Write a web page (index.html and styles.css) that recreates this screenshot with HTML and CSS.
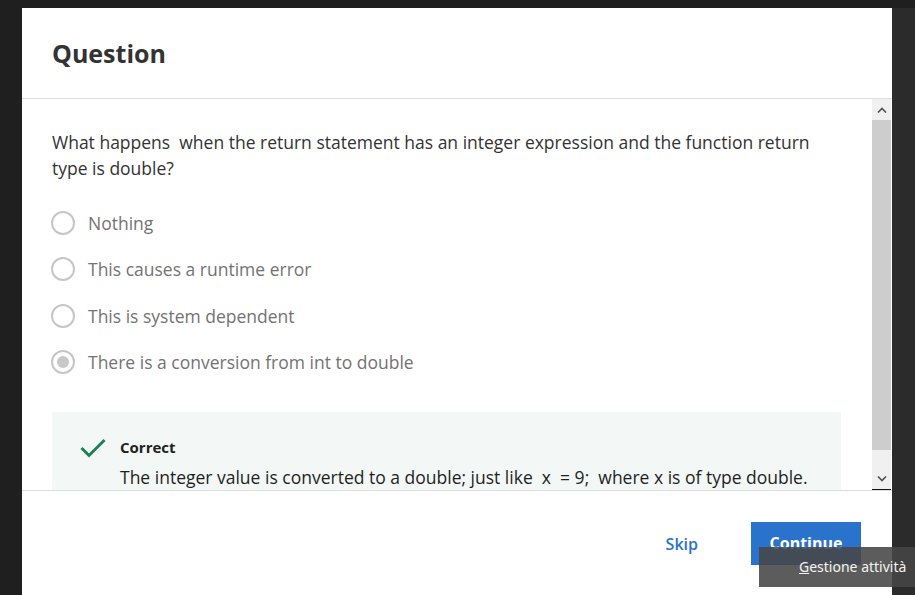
FILE: index.html
```html
<!DOCTYPE html>
<html lang="en">
<head>
<meta charset="utf-8">
<title>Question</title>
<link rel="stylesheet" href="styles.css">
</head>
<body>
<div class="screen">
  <div class="modal">
    <header class="modal-header"><h2 class="title">Question</h2></header>
    <div class="modal-body">
      <div class="scroll-content">
        <p class="question">What happens&nbsp; when the return statement has an integer expression and the function return type is double?</p>
        <ul class="options">
          <li class="option"><span class="radio"></span><span class="label">Nothing</span></li>
          <li class="option"><span class="radio"></span><span class="label">This causes a runtime error</span></li>
          <li class="option"><span class="radio"></span><span class="label">This is system dependent</span></li>
          <li class="option"><span class="radio checked"></span><span class="label">There is a conversion from int to double</span></li>
        </ul>
        <div class="feedback">
          <svg class="check" width="26" height="20" viewBox="0 0 26 20"><polyline points="1.5,10 9,17.5 24.5,2" fill="none" stroke="#1e8155" stroke-width="3"/></svg>
          <div class="fb-body">
            <div class="fb-title">Correct</div>
            <p class="fb-text">The integer value is converted to a double; just like&nbsp; x&nbsp; = 9;&nbsp; where x is of type double.</p>
          </div>
        </div>
      </div>
      <div class="scrollbar">
        <div class="sb-btn"><svg width="10" height="6" viewBox="0 0 10 6"><polyline points="1,5.5 5,1.5 9,5.5" fill="none" stroke="#505050" stroke-width="1.6"/></svg></div>
        <div class="sb-thumb"></div>
        <div class="sb-track"></div>
        <div class="sb-btn sb-down"><svg width="10" height="6" viewBox="0 0 10 6"><polyline points="1,0.5 5,4.5 9,0.5" fill="none" stroke="#505050" stroke-width="1.6"/></svg></div>
      </div>
    </div>
    <footer class="modal-footer">
      <button class="btn-skip">Skip</button>
      <button class="btn-continue">Continue</button>
    </footer>
  </div>
  <div class="side"></div>
  <div class="tooltip"><span class="ul">G</span>estione attività</div>
</div>
</body>
</html>
```

FILE: styles.css
```css
* { box-sizing: border-box; }
html, body { margin: 0; padding: 0; }
body {
  background: #1f1f1f;
  font-family: "Open Sans", "Noto Sans", sans-serif;
  overflow: hidden;
}
.screen {
  position: relative;
  width: 915px;
  height: 595px;
  display: flex;
  padding: 8px 0 0 22px;
}
.modal {
  width: 870px;
  height: 587px;
  background: #fff;
  display: flex;
  flex-direction: column;
}
.side {
  flex: 1;
  background: #2b2b2b;
}
.modal-header {
  height: 91px;
  padding: 29px 30px 0;
  border-bottom: 1px solid #dedede;
}
.title {
  margin: 0;
  font-size: 25px;
  line-height: 32px;
  font-weight: 700;
  color: #333;
}
.modal-body {
  height: 391px;
  display: flex;
  overflow: hidden;
}
.scroll-content {
  flex: 1;
  padding: 30px 31px 0 30px;
  overflow: hidden;
}
.question {
  margin: 0;
  font-size: 17.5px;
  line-height: 26px;
  color: #333;
}
.options {
  list-style: none;
  margin: 19px 0 0;
  padding: 0;
}
.option {
  display: flex;
  align-items: center;
  height: 46.33px;
  gap: 13px;
}
.radio {
  width: 24px;
  height: 24px;
  margin-left: -1px;
  border: 2px solid #c6c6c6;
  border-radius: 50%;
  display: flex;
  align-items: center;
  justify-content: center;
  flex: none;
}
.radio.checked::after {
  content: "";
  width: 12px;
  height: 12px;
  border-radius: 50%;
  background: #c8c8c8;
}
.label {
  font-size: 17.5px;
  line-height: 26px;
  color: #737373;
}
.feedback {
  margin-top: 27px;
  background: #f3f8f6;
  display: flex;
  gap: 14px;
  padding: 25px 28px 30px;
  align-items: flex-start;
}
.check { flex: none; margin-top: 1px; }
.fb-title {
  font-size: 15px;
  line-height: 20px;
  font-weight: 700;
  color: #222;
}
.fb-text {
  margin: 7px 0 0;
  font-size: 17.5px;
  line-height: 26px;
  color: #1f1f1f;
}
.scrollbar {
  width: 19px;
  margin-right: 1px;
  background: #f0f0f0;
  display: flex;
  flex-direction: column;
  border-bottom: 1px solid #111;
}
.sb-btn {
  height: 21px;
  display: flex;
  align-items: center;
  justify-content: center;
  flex: none;
}
.sb-thumb {
  height: 330px;
  background: #cdcdcd;
  flex: none;
}
.sb-track { flex: 1; }
.modal-footer {
  flex: 1;
  border-top: 1px solid #dedede;
  display: flex;
  justify-content: flex-end;
  align-items: flex-start;
  padding: 31px 31px 0 0;
  gap: 37px;
}
button {
  font-family: "Open Sans", "Noto Sans", sans-serif;
  font-size: 16px;
  font-weight: 700;
  border: none;
  height: 43px;
  cursor: pointer;
}
.btn-skip {
  background: transparent;
  color: #2a73cc;
  padding: 0 16px;
  font-weight: 600;
}
.btn-continue {
  width: 110px;
  background: #2a73cc;
  color: #fff;
  padding: 0 0 2px;
}
.tooltip {
  position: absolute;
  left: 759px;
  top: 547px;
  width: 156px;
  height: 40px;
  background: rgba(70, 70, 70, 0.88);
  color: #f2f2f2;
  font-family: "Noto Sans", "Open Sans", sans-serif;
  font-size: 14px;
  line-height: 40px;
  padding-left: 40px;
  white-space: nowrap;
}
.ul { text-decoration: underline; }
```
